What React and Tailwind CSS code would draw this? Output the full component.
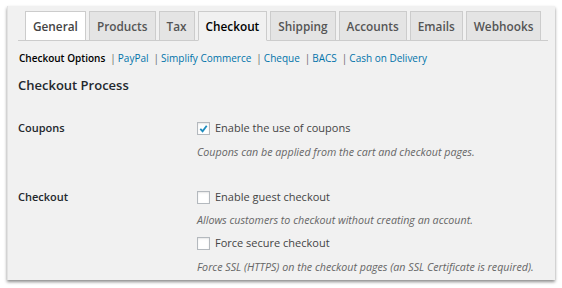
import React from "react";

const tabs = ["General", "Products", "Tax", "Checkout", "Shipping", "Accounts", "Emails", "Webhooks"];
const links = ["PayPal", "Simplify Commerce", "Cheque", "BACS", "Cash on Delivery"];

function Check({ checked }) {
  return (
    <span className="w-[13px] h-[13px] border border-[#b4b9be] bg-white flex items-center justify-center shadow-[inset_0_1px_2px_rgba(0,0,0,0.1)]">
      {checked && (
        <svg width="11" height="11" viewBox="0 0 12 12">
          <path d="M2.5 6.5 L5 9 L9.5 3" fill="none" stroke="#1e8cbe" strokeWidth="2" />
        </svg>
      )}
    </span>
  );
}

function Option({ checked, label }) {
  return (
    <div className="flex items-center gap-[5px] h-[18px]">
      <Check checked={checked} />
      <span className="text-[11px] text-[#444]">{label}</span>
    </div>
  );
}

function Desc({ children }) {
  return <div className="text-[10.7px] italic text-[#666] h-[18px] leading-[18px]">{children}</div>;
}

export default function App() {
  return (
    <div className="w-[562px] h-[288px] bg-white pt-[6px] pl-[7px] font-['Open_Sans',sans-serif]">
      <div className="w-[548px] h-[274px] bg-[#f1f1f1] border-l border-[#e2e2e2] shadow-[0_2px_3px_rgba(0,0,0,0.45)]">
        <div className="ml-[10px] mr-[7px] pt-[5px] pl-[7px] flex gap-[3px] border-b border-[#ccc]">
          {tabs.map((t) => (
            <div
              key={t}
              className={
                t === "Checkout"
                  ? "h-[30px] -mb-px pt-[1px] px-[7px] flex items-center border border-[#ccc] border-b-[#f1f1f1] bg-[#f1f1f1] text-[11.8px] font-semibold text-[#000]"
                  : t === "General"
                  ? "h-[29px] pt-[1px] px-[7px] flex items-center border border-[#ccc] border-b-0 bg-white text-[11.8px] font-semibold text-[#444]"
                  : "h-[29px] pt-[1px] px-[7px] flex items-center border border-[#ccc] border-b-0 bg-[#e4e4e4] text-[11.8px] font-semibold text-[#555]"
              }
            >
              {t}
            </div>
          ))}
        </div>
        <div className="pl-[11px] mt-[8px] flex items-center text-[10px] h-[18px]">
          <span className="font-semibold text-[#000]">Checkout Options</span>
          {links.map((l) => (
            <span key={l} className="text-[#0073aa]">
              <span className="text-[#666] ml-[5px] mr-[2px]">|</span>
              {l}
            </span>
          ))}
        </div>
        <div className="pl-[10px] mt-[7px] text-[13px] font-semibold text-[#23282d] h-[22px] leading-[22px]">
          Checkout Process
        </div>
        <div className="flex mt-[23px] pl-[10px]">
          <div className="w-[179px] text-[11px] font-semibold text-[#23282d] h-[18px] leading-[18px]">Coupons</div>
          <div className="flex flex-col gap-[6px]">
            <Option checked label="Enable the use of coupons" />
            <Desc>Coupons can be applied from the cart and checkout pages.</Desc>
          </div>
        </div>
        <div className="flex mt-[27px] pl-[10px]">
          <div className="w-[179px] text-[11px] font-semibold text-[#23282d] h-[18px] leading-[18px]">Checkout</div>
          <div className="flex flex-col gap-[5px]">
            <Option label="Enable guest checkout" />
            <Desc>Allows customers to checkout without creating an account.</Desc>
            <Option label="Force secure checkout" />
            <div className="mt-[1px]">
              <Desc>Force SSL (HTTPS) on the checkout pages (an SSL Certificate is required).</Desc>
            </div>
          </div>
        </div>
      </div>
    </div>
  );
}
